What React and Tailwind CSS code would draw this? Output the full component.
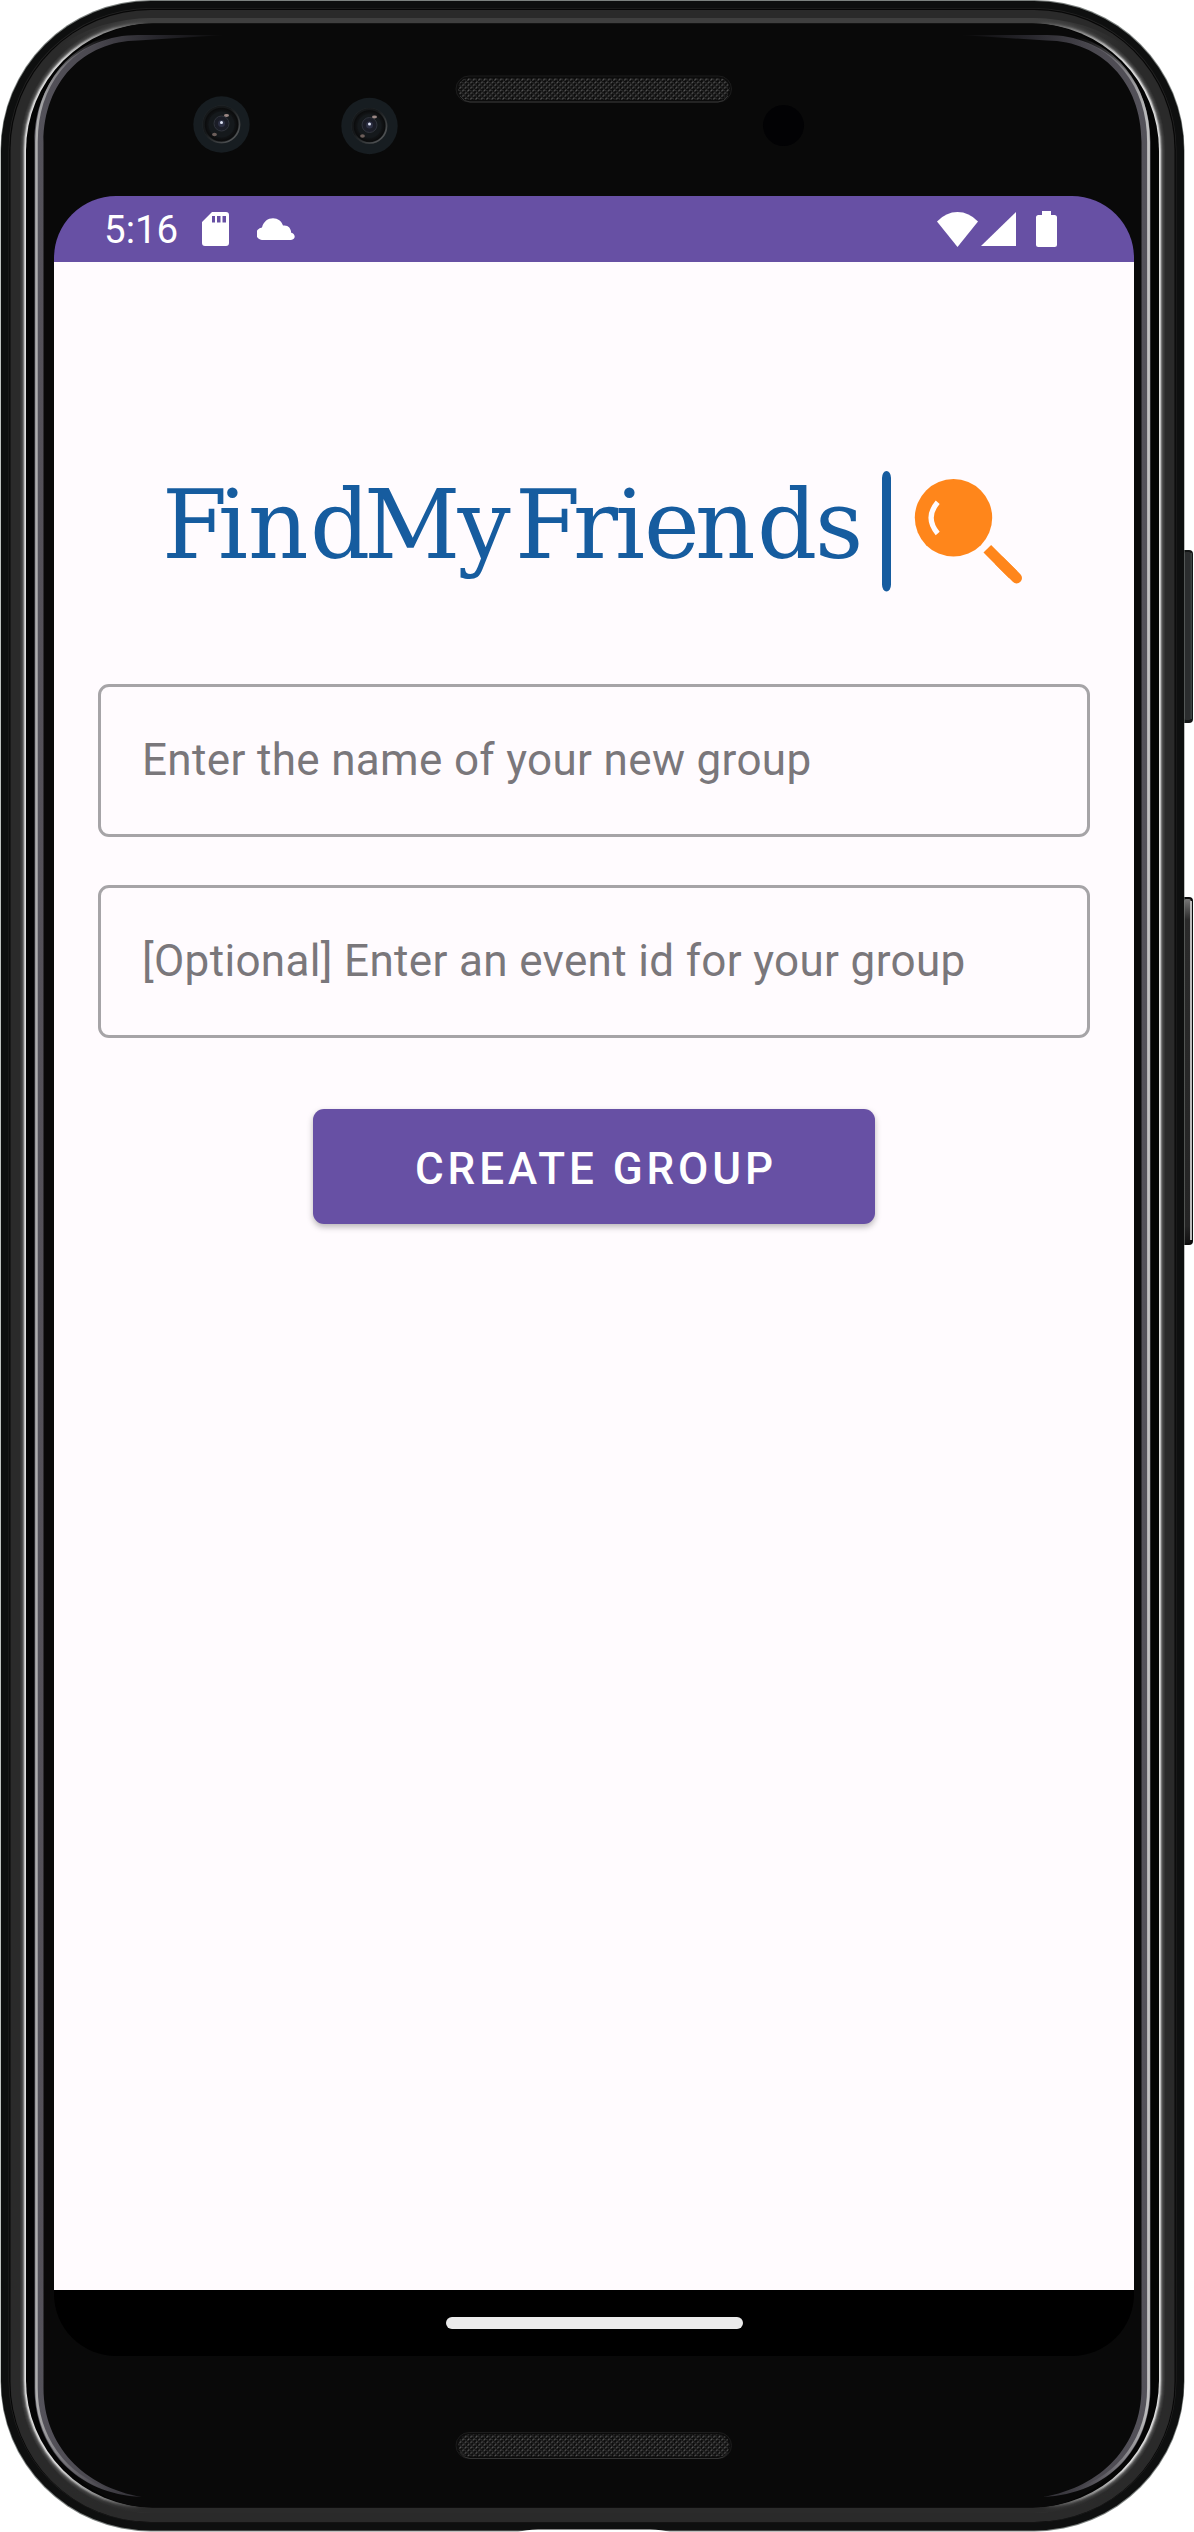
const highlightSteps = [
  [0, "#343434"],
  [1, "#3e3e3e"],
  [2, "#505050"],
  [3, "#787878"],
  [4, "#c0c0c0"],
  [5, "#e0e0e0"],
];

function Speaker({ y }) {
  return (
    <g>
      <rect x="456" y={y} width="275.5" height="26" rx="13" fill="#0c0c0c" stroke="#1c1c1c" />
      <rect x="458" y={y + 2} width="271.5" height="22" rx="11" fill="url(#mesh)" />
      <path d={`M460 ${y + 20}q4 6 10 6H718q6 0 10-6`} fill="none" stroke="#343434" strokeWidth="1" />
    </g>
  );
}

function Camera({ cx, cy, r }) {
  return (
    <g>
      <circle cx={cx} cy={cy} r="28.2" fill="#171d21" />
      <circle cx={cx} cy={cy} r={r} fill="url(#lens)" />
      <circle cx={cx} cy={cy} r={r - 1} fill="none" stroke="url(#lensRim)" strokeWidth="1.6" />
      <circle cx={cx} cy={cy} r={r - 6} fill="#15191c" />
      <circle cx={cx} cy={cy - 1} r="7.5" fill="#1b1d27" stroke="#30343c" />
      <circle cx={cx} cy={cy - 1} r="3.5" fill="#2e3145" />
      <circle cx={cx} cy={cy - 2} r="1.5" fill="#dfe4f5" />
      <ellipse cx={cx + 5} cy={cy - 9} rx="2.5" ry="1.4" fill="#9b8784" />
      <ellipse cx={cx - 7} cy={cy + 10} rx="2.4" ry="1.8" fill="#6d5f5b" />
    </g>
  );
}

function DeviceBody() {
  return (
    <svg className="absolute inset-0" width="1194" height="2532" viewBox="0 0 1194 2532" aria-hidden="true">
      <defs>
        <pattern id="mesh" width="5.4" height="5.4" patternUnits="userSpaceOnUse">
          <path d="M0.4 2.2L2.2 0.4M3.1 4.9L4.9 3.1" stroke="#5c5c5c" strokeWidth="1.1" />
          <path d="M3.1 1L4.2 2.1M0.4 3.7L1.500 4.8" stroke="#3a3a3a" strokeWidth="1" />
        </pattern>
        <radialGradient id="lens">
          <stop offset="0.5" stopColor="#1a1d20" />
          <stop offset="0.85" stopColor="#0b0c0d" />
          <stop offset="1" stopColor="#26292b" />
        </radialGradient>
        <linearGradient id="lensRim" x1="0" y1="0" x2="1" y2="1">
          <stop offset="0.4" stopColor="#15181a" />
          <stop offset="0.9" stopColor="#55585a" />
        </linearGradient>
        <linearGradient id="flat" gradientUnits="userSpaceOnUse" x1="0" y1="0" x2="1185" y2="0">
          <stop offset="0.05" stopColor="#3f3f3f" stopOpacity="0" />
          <stop offset="0.125" stopColor="#3f3f3f" />
          <stop offset="0.875" stopColor="#3f3f3f" />
          <stop offset="0.95" stopColor="#3f3f3f" stopOpacity="0" />
        </linearGradient>
        <linearGradient id="flatBottom" gradientUnits="userSpaceOnUse" x1="0" y1="0" x2="1185" y2="0">
          <stop offset="0.05" stopColor="#2b2b2b" stopOpacity="0" />
          <stop offset="0.12" stopColor="#2b2b2b" />
          <stop offset="0.88" stopColor="#2b2b2b" />
          <stop offset="0.95" stopColor="#2b2b2b" stopOpacity="0" />
        </linearGradient>
        <linearGradient id="glintLeft" gradientUnits="userSpaceOnUse" x1="34" y1="0" x2="225" y2="0">
          <stop offset="0" stopColor="#55535b" />
          <stop offset="0.3" stopColor="#4b4950" />
          <stop offset="0.65" stopColor="#26252b" />
          <stop offset="1" stopColor="#0a0a0a" />
        </linearGradient>
        <linearGradient id="glintRight" gradientUnits="userSpaceOnUse" x1="1151" y1="0" x2="960" y2="0">
          <stop offset="0" stopColor="#55535b" />
          <stop offset="0.3" stopColor="#4b4950" />
          <stop offset="0.65" stopColor="#26252b" />
          <stop offset="1" stopColor="#0a0a0a" />
        </linearGradient>
        <linearGradient id="edgeLeft" gradientUnits="userSpaceOnUse" x1="34" y1="0" x2="110" y2="0">
          <stop offset="0" stopColor="#b4b4b4" />
          <stop offset="1" stopColor="#55535b" stopOpacity="0" />
        </linearGradient>
        <linearGradient id="edgeRight" gradientUnits="userSpaceOnUse" x1="1151" y1="0" x2="1075" y2="0">
          <stop offset="0" stopColor="#c8c8c8" />
          <stop offset="1" stopColor="#55535b" stopOpacity="0" />
        </linearGradient>
        <linearGradient id="keyTop" x1="0" y1="0" x2="0" y2="1">
          <stop offset="0" stopColor="#777777" />
          <stop offset="0.06" stopColor="#2b2b2b" />
          <stop offset="0.95" stopColor="#252525" />
          <stop offset="1" stopColor="#111111" />
        </linearGradient>
      </defs>

      {/* side keys */}
      <rect x="1180" y="550" width="13" height="173" rx="4" fill="#141616" />
      <rect x="1184" y="552" width="7" height="168" rx="2" fill="#2b2d2e" />
      <rect x="1190.5" y="553" width="1.5" height="166" fill="#3d4443" />
      <rect x="1180" y="897" width="13" height="348" rx="4" fill="#0c0c0c" />
      <rect x="1184" y="899" width="7" height="344" rx="2" fill="url(#keyTop)" />
      <rect x="1190" y="901" width="2" height="339" fill="#bdbdbd" />

      {/* shell */}
      <rect x="0.5" y="0" width="1184" height="2531.5" rx="150" fill="#7c817f" />
      <rect x="1" y="1" width="1183" height="2529.5" rx="150" fill="#0e0f0f" />
      <rect x="8.5" y="8" width="1168" height="2514.5" rx="142" fill="#232323" />
      <rect x="9.2" y="8.8" width="1166.6" height="2513.5" rx="141.5" fill="#070707" />
      <rect x="10.5" y="10" width="1164" height="2512" rx="140" fill="#2a2a2a" />
      {highlightSteps.map(([inset, color]) => (
        <rect
          key={inset}
          x={20 + inset}
          y={18 + inset}
          width={1145 - inset * 2}
          height={2495 - inset * 2}
          rx={132 - inset}
          fill={color}
        />
      ))}
      <rect x="20" y="18" width="1145" height="200" rx="132" fill="url(#flat)" />
      <rect x="20" y="2314" width="1145" height="199" rx="132" fill="url(#flatBottom)" />
      <rect x="26" y="23.5" width="1133" height="2484" rx="127" fill="#040404" />
      <rect x="43" y="23.5" width="1099" height="2484" rx="110" fill="#090909" />

      {/* glass edge reflections */}
      <path
        d="M225 35H138C80 35 34.500 78 34.500 142V2388C34.500 2448 76 2494 142 2497C84 2487 43.500 2446 43.500 2388V142C43.500 82 84 41 138 40.500Z"
        fill="url(#glintLeft)"
      />
      <path d="M120 36.500C72 42 36.500 84 36.500 142V2388C36.500 2436 64 2476 110 2490" fill="none" stroke="url(#edgeLeft)" strokeWidth="2.5" />
      <path
        d="M960 35H1047C1105 35 1150.500 78 1150.500 142V2388C1150.500 2448 1109 2494 1043 2497C1101 2487 1141.500 2446 1141.500 2388V142C1141.500 82 1101 41 1047 40.500Z"
        fill="url(#glintRight)"
      />
      <path d="M1065 36.500C1113 42 1148.500 84 1148.500 142V2388C1148.500 2436 1121 2476 1075 2490" fill="none" stroke="url(#edgeRight)" strokeWidth="2.800" />

      <Speaker y={76} />
      <Speaker y={2432.5} />
      <Camera cx={221.500} cy={124.500} r={19} />
      <Camera cx={369.500} cy={126} r={18} />
      <circle cx="783.500" cy="125.500" r="20.500" fill="#020204" />
      <path d="M518 2532q8-2.500 20-2.500H650q12 0 20 2.500z" fill="#ffffff" />
    </svg>
  );
}

function StatusBar() {
  return (
    <div className="flex h-[66px] shrink-0 items-center bg-[#6750a4] pr-[77px] pl-[50px] text-white">
      <span className="w-[75px] pt-[3px] text-[38.5px] leading-none whitespace-nowrap">5:16</span>
      <svg className="ml-[23px]" width="27" height="34" viewBox="0 0 27 34" fill="currentColor">
        <path
          fillRule="evenodd"
          d="M10 0H24Q27 0 27 3V31Q27 34 24 34H3Q0 34 0 31V10ZM10 4V10.500H13V4ZM15 4V10.500H18.500V4ZM20.500 4V10.500H24V4Z"
        />
      </svg>
      <svg className="ml-[28px]" width="38" height="22" viewBox="0 0 38 22" fill="currentColor">
        <path d="M6 22a6 6 0 0 1-1-12.500C6.500 3.500 11 .3 16 .3c5 0 8.500 3 10 7.200 5-.8 8 2.500 8.200 7.200 4.800 1 4.600 7.300-.2 7.300Z" />
      </svg>
      <svg className="ml-auto" width="41" height="35" viewBox="0 0 41 35" fill="currentColor">
        <path d="M0 9.500Q9 0 20.500 0T41 9.500L20.500 35Z" />
      </svg>
      <svg className="ml-[3px]" width="35" height="34" viewBox="0 0 35 34" fill="currentColor">
        <path d="M35 0V34H0Z" />
      </svg>
      <svg className="ml-[20px]" width="21" height="36" viewBox="0 0 21 36" fill="currentColor">
        <path d="M6 0H15V4H18.500Q21 4 21 6.500V33.500Q21 36 18.500 36H2.500Q0 36 0 33.500V6.500Q0 4 2.500 4H6Z" />
      </svg>
    </div>
  );
}

const STRETCH = 0.98;
const letterOffsets = [0, 56, 86, 148, 202, 295.5, 353, 411, 453, 482, 533, 595, 653];

function Logo() {
  return (
    <svg className="h-[130px] w-[864px]" viewBox="162 465 864 130" role="img" aria-label="FindMyFriends">
      <text
        transform={`translate(162 557.5) scale(${STRETCH} 1)`}
        x={letterOffsets.map((x) => x / STRETCH).join(" ")}
        className="fill-[#165c9f] font-['DejaVu_Serif',serif] text-[96px]"
      >
        FindMyFriends
      </text>
      <rect x="882" y="471" width="9" height="120.500" rx="4.500" ry="7" fill="#165c9f" />
      <circle cx="953.500" cy="517.800" r="38.700" fill="#ff861b" />
      <path d="M937.700 502.200Q924.500 517.800 937.700 533.500" fill="none" stroke="#fffbfe" strokeWidth="5.200" />
      <path d="M987.300 548.700L1013 574.500" stroke="#ff861b" strokeWidth="10.800" />
      <path d="M1000 561.500L1016.600 578" stroke="#ff861b" strokeWidth="10.800" strokeLinecap="round" />
    </svg>
  );
}

function Field({ hint }) {
  return (
    <div className="flex h-[153px] items-center rounded-[11px] border-[3px] border-[#a6a4a7] px-[41px] pb-[2px]">
      <span className="text-[44px] leading-none tracking-[0.34px] whitespace-nowrap text-[#7a777b]">{hint}</span>
    </div>
  );
}

export default function App() {
  return (
    <div className="relative h-[2532px] w-[1194px] overflow-hidden bg-white font-[Roboto,sans-serif]">
      <DeviceBody />
      <div className="relative pt-[196px] pl-[54px]">
        <div className="flex h-[2160px] w-[1080px] flex-col overflow-hidden rounded-[62px] bg-black">
          <StatusBar />
          <main className="flex h-[2028px] flex-col bg-[#fffbfe] px-[44px] pt-[203px]">
            <div className="pl-[64px]">
              <Logo />
            </div>
            <div className="mt-[89px] flex flex-col gap-[48px]">
              <Field hint="Enter the name of your new group" />
              <Field hint="[Optional] Enter an event id for your group" />
            </div>
            <button className="mt-[71px] h-[115px] w-[562px] self-center rounded-[11px] bg-[#6750a4] pt-[4px] pl-[4px] text-[44px] leading-none font-medium tracking-[3.9px] text-white shadow-[0_3px_6px_rgba(0,0,0,0.28)]">
              CREATE GROUP
            </button>
          </main>
          <div className="flex flex-1 items-center justify-center">
            <div className="h-[12px] w-[297px] rounded-full bg-[#ebebeb]" />
          </div>
        </div>
      </div>
    </div>
  );
}
